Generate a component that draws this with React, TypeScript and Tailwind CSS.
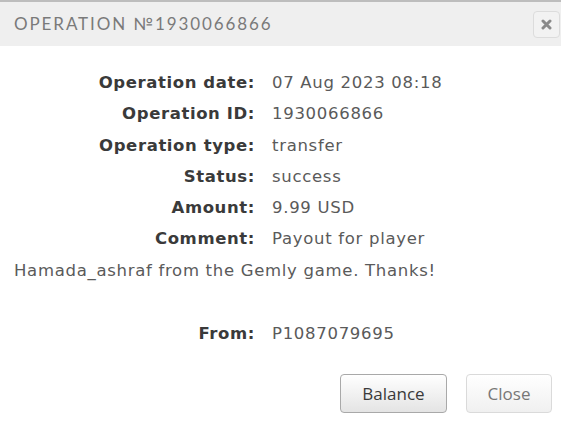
import React from 'react';

const rows: { label: string; value: string }[] = [
  { label: 'Operation date:', value: '07 Aug 2023 08:18' },
  { label: 'Operation ID:', value: '1930066866' },
  { label: 'Operation type:', value: 'transfer' },
  { label: 'Status:', value: 'success' },
  { label: 'Amount:', value: '9.99 USD' },
  { label: 'Comment:', value: 'Payout for player Hamada_ashraf from the Gemly game. Thanks!' },
];

const Row: React.FC<{ label: string; value: string }> = ({ label, value }) => (
  <div className="leading-[31.3px]">
    <span className="inline-block w-[241px] text-right font-bold tracking-[0.6px] text-[#3a3a3a] mr-[17px]">{label}</span>
    <span className="text-[#5a5a5a] tracking-[0.7px]">{value}</span>
  </div>
);

export default function App() {
  return (
    <div className="w-[561px] h-[421px] bg-white font-['DejaVu_Sans',sans-serif] text-[16.5px] overflow-hidden">
      <div className="h-[46px] bg-[#efefef] border-t-2 border-[#bdbdbd] flex items-center justify-between pl-[14px]">
        <span className="font-['Lato',sans-serif] text-[17px] tracking-[1.9px] text-[#7a7a7a]">OPERATION №1930066866</span>
        <button className="w-[27px] h-[27px] mr-[1px] rounded-[4px] border border-[#dcdcdc] bg-[#f2f2f2] flex items-center justify-center">
          <svg width="11" height="11" viewBox="0 0 11 11">
            <path d="M2 2 L9 9 M9 2 L2 9" stroke="#8a8a8a" strokeWidth="3" strokeLinecap="round" />
          </svg>
        </button>
      </div>
      <div className="pl-[14px] pr-[9px] pt-[21px]">
        {rows.map((r) => (
          <Row key={r.label} label={r.label} value={r.value} />
        ))}
        <div className="mt-[32px]">
          <Row label="From:" value="P1087079695" />
        </div>
        <div className="flex justify-end gap-[19px] mt-[25px] font-['Open_Sans',sans-serif] text-[17px]">
          <button className="w-[107px] h-[39px] rounded-[4px] border border-[#a9a9a9] bg-gradient-to-b from-white to-[#e4e4e4] text-[#3a3a3a]">
            Balance
          </button>
          <button className="w-[86px] h-[39px] rounded-[4px] border border-[#dadada] bg-gradient-to-b from-white to-[#f0f0f0] text-[#777]">
            Close
          </button>
        </div>
      </div>
    </div>
  );
}
